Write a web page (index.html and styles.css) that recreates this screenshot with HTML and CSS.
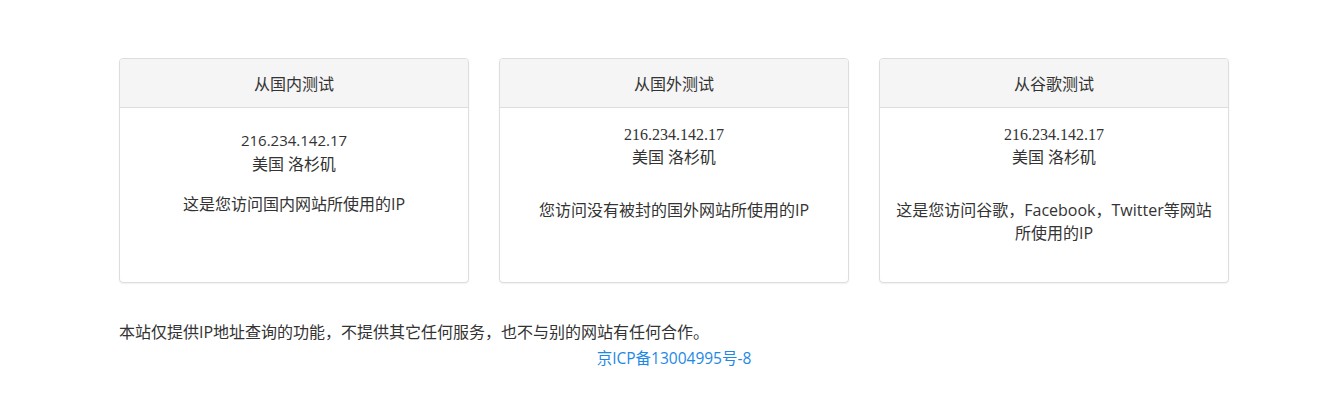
FILE: index.html
```html
<!DOCTYPE html>
<html lang="zh-CN">
<head>
<meta charset="utf-8">
<title>IP查询</title>
<link rel="stylesheet" href="styles.css">
</head>
<body>
<div class="page">
  <div class="cards">
    <div class="card">
      <div class="card-head">从国内测试</div>
      <div class="card-body body-cn">
        <p class="ip ip-sans">216.234.142.17</p>
        <p class="loc">美国 洛杉矶</p>
        <p class="desc desc-cn">这是您访问国内网站所使用的IP</p>
      </div>
    </div>
    <div class="card">
      <div class="card-head">从国外测试</div>
      <div class="card-body">
        <p class="ip ip-serif">216.234.142.17</p>
        <p class="loc loc-tight">美国 洛杉矶</p>
        <p class="desc desc-far">您访问没有被封的国外网站所使用的IP</p>
      </div>
    </div>
    <div class="card">
      <div class="card-head">从谷歌测试</div>
      <div class="card-body">
        <p class="ip ip-serif">216.234.142.17</p>
        <p class="loc loc-tight">美国 洛杉矶</p>
        <p class="desc desc-far">这是您访问谷歌，Facebook，Twitter等网站所使用的IP</p>
      </div>
    </div>
  </div>
  <div class="footer">
    <p class="notice">本站仅提供IP地址查询的功能，不提供其它任何服务，也不与别的网站有任何合作。</p>
    <p class="icp"><a href="#">京ICP备13004995号-8</a></p>
  </div>
</div>
</body>
</html>
```
FILE: styles.css
```css
* { box-sizing: border-box; }
html, body { margin: 0; padding: 0; background: #fff; }
body {
  font-family: "Open Sans", "Noto Sans CJK SC", sans-serif;
  color: #333;
  font-size: 16px;
}
p { margin: 0; }
.page {
  width: 1137px;
  padding-left: 27px;
  margin: 0 auto;
  padding-top: 58px;
}
.cards {
  display: grid;
  grid-template-columns: repeat(3, 350px);
  column-gap: 30px;
}
.card {
  border: 1px solid #ddd;
  border-radius: 4px;
  background: #fff;
  height: 225px;
  box-shadow: 0 1px 2px rgba(0,0,0,0.06);
  overflow: hidden;
}
.card-head {
  background: #f5f5f5;
  border-bottom: 1px solid #ddd;
  height: 49px;
  line-height: 50px;
  text-align: center;
  font-size: 16px;
}
.card-body {
  padding: 16px 15px 0;
  text-align: center;
}
.body-cn { padding-top: 20px; }
.ip { line-height: 24px; }
.ip-sans { font-family: "Open Sans", "Noto Sans CJK SC", sans-serif; font-size: 15px; }
.ip-serif { font-family: "Liberation Serif", "Noto Sans CJK SC", serif; font-size: 16px; line-height: 22px; }
.loc { line-height: 24px; }
.loc-tight { line-height: 22px; }
.desc { line-height: 22px; }
.desc-cn { margin-top: 16px; line-height: 24px; }
.desc-far { margin-top: 31px; line-height: 23px; }
.footer {
  width: 1110px;
  padding-top: 38px;
  font-size: 16px;
}
.notice { line-height: 22px; }
.icp {
  text-align: center;
  line-height: 22px;
  margin-top: 4px;
  font-size: 15.5px;
}
.icp a { color: #1e88e5; text-decoration: none; }
```
